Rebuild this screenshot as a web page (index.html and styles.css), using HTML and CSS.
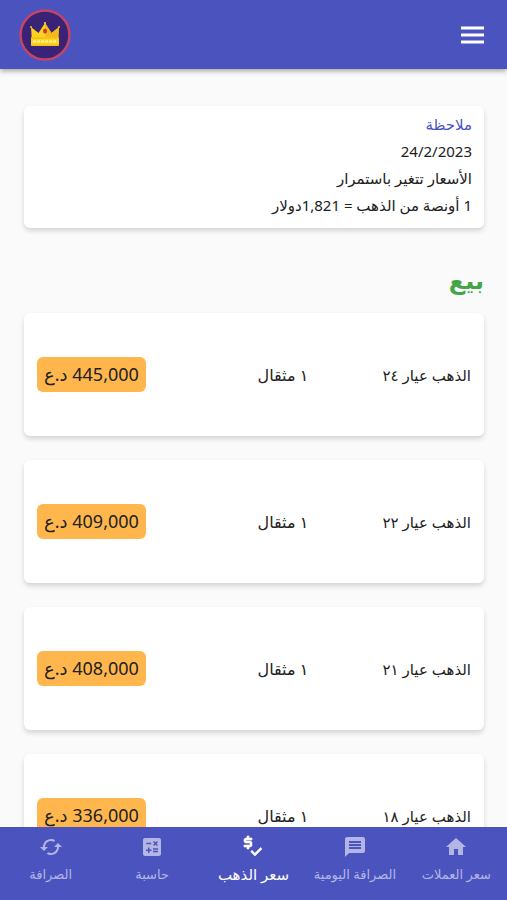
FILE: index.html
```html
<!DOCTYPE html>
<html lang="ar" dir="rtl">
<head>
    <meta charset="UTF-8">
    <meta name="viewport" content="width=device-width, initial-scale=1.0">
    <title>سعر الذهب</title>
    <link rel="stylesheet" href="styles.css">
</head>
<body>
    <header class="topbar">
        <button class="menu-btn" type="button" aria-label="القائمة">
            <svg viewBox="0 0 30 30"><path d="M3 6.500h23v3H3zM3 13.500h23v3H3zM3 20.500h23v3H3z"/></svg>
        </button>
        <a class="logo" href="#" aria-label="الرئيسية">
            <svg viewBox="0 0 52 52">
                <circle cx="26" cy="26" r="24.500" fill="#3a2376" stroke="#c24566" stroke-width="2.500"/>
                <path d="M13 33 L12 18 L19.500 24 L26 14 L32.500 24 L40 18 L39 33 Z" fill="#fcd21c"/>
                <path d="M26 14 L32.500 24 L40 18 L39 33 L26 33 Z" fill="#f5b81e"/>
                <rect x="12" y="28" width="28" height="9" rx="1" fill="#fbd51f"/>
                <path d="M12 29h28M12 36h28" stroke="#f0b41b" stroke-width="1"/>
                <path d="M14 32.500h24" stroke="#fff09a" stroke-width="2" stroke-dasharray="3 1"/>
                <circle cx="12" cy="18" r="1" fill="#f5c31e"/>
                <circle cx="26" cy="14" r="1" fill="#ffe03a"/>
                <circle cx="40" cy="18" r="1" fill="#f5c31e"/>
                <ellipse cx="26" cy="22" rx="2" ry="2.500" fill="#d23b2a"/>
            </svg>
        </a>
    </header>

    <main class="content">
        <section class="card note">
            <h2 class="note-title">ملاحظة</h2>
            <p>24/2/2023</p>
            <p>الأسعار تتغير باستمرار</p>
            <p>1 أونصة من الذهب = 1,821دولار</p>
        </section>

        <h1 class="section-title">بيع</h1>

        <div class="prices">
            <div class="card price-row">
                <span class="karat">الذهب عيار ٢٤</span>
                <span class="unit">١ مثقال</span>
                <span class="price">445,000 د.ع</span>
            </div>
            <div class="card price-row">
                <span class="karat">الذهب عيار ٢٢</span>
                <span class="unit">١ مثقال</span>
                <span class="price">409,000 د.ع</span>
            </div>
            <div class="card price-row">
                <span class="karat">الذهب عيار ٢١</span>
                <span class="unit">١ مثقال</span>
                <span class="price">408,000 د.ع</span>
            </div>
            <div class="card price-row">
                <span class="karat">الذهب عيار ١٨</span>
                <span class="unit">١ مثقال</span>
                <span class="price">336,000 د.ع</span>
            </div>
        </div>
    </main>

    <nav class="bottom-nav">
        <a class="nav-item" href="#">
            <svg viewBox="0 0 24 24"><path d="M10 20v-6h4v6h5v-8h3L12 3 2 12h3v8z"/></svg>
            <span>سعر العملات</span>
        </a>
        <a class="nav-item" href="#">
            <svg viewBox="0 0 24 24"><path d="M20 2H4c-1.100 0-2 .9-2 2v18l4-4h14c1.100 0 2-.9 2-2V4c0-1.100-.9-2-2-2zm-2 12H6v-2h12v2zm0-3H6V9h12v2zm0-3H6V6h12v2z"/></svg>
            <span>الصرافة اليومية</span>
        </a>
        <a class="nav-item active" href="#">
            <svg viewBox="0 0 24 24" stroke="currentColor" stroke-width="0.600"><path d="M11 8c0-1.100-.9-2-2-2H5V5h6V3H8V1H6v2H5c-1.100 0-2 .9-2 2v1c0 1.100.9 2 2 2h4v2H3v2h3v2h2v-2h1c1.100 0 2-.9 2-2V8zM19.590 12.520l-5.660 5.650-2.830-2.830-1.410 1.420L13.930 21 21 13.930z"/></svg>
            <span>سعر الذهب</span>
        </a>
        <a class="nav-item" href="#">
            <svg viewBox="0 0 24 24"><path d="M19 3H5c-1.100 0-2 .9-2 2v14c0 1.100.9 2 2 2h14c1.100 0 2-.9 2-2V5c0-1.100-.9-2-2-2zm-5.970 4.060L14.090 6l1.410 1.410L16.910 6l1.060 1.060-1.410 1.410 1.410 1.410-1.060 1.060-1.410-1.400-1.410 1.410-1.060-1.060 1.410-1.410-1.410-1.420zm-6.780.66h5v1.500h-5v-1.500zM11.500 16h-2v2H8v-2H6v-1.500h2v-2h1.500v2h2V16zm6.500 1.250h-5v-1.500h5v1.500zm0-2.500h-5v-1.500h5v1.500z"/></svg>
            <span>حاسبة</span>
        </a>
        <a class="nav-item" href="#">
            <svg viewBox="0 0 24 24"><path d="M19 8l-4 4h3c0 3.310-2.690 6-6 6-1.010 0-1.970-.25-2.800-.7l-1.460 1.460C8.970 19.540 10.430 20 12 20c4.420 0 8-3.580 8-8h3l-4-4zM6 12c0-3.310 2.690-6 6-6 1.010 0 1.970.25 2.800.7l1.460-1.460C15.030 4.460 13.570 4 12 4c-4.420 0-8 3.580-8 8H1l4 4 4-4H6z"/></svg>
            <span>الصرافة</span>
        </a>
    </nav>
</body>
</html>
```
FILE: styles.css
```css
:root {
    --primary: #4b53bf;
    --bg: #fafafa;
    --badge: #ffb74d;
    --green: #43a547;
    --text: #212121;
}

* {
    box-sizing: border-box;
}

body {
    display: flex;
    flex-direction: column;
    height: 100vh;
    margin: 0;
    background: var(--bg);
    color: var(--text);
    font-family: 'Noto Sans', 'DejaVu Sans', sans-serif;
}

.topbar {
    display: flex;
    justify-content: space-between;
    align-items: center;
    height: 69px;
    flex-shrink: 0;
    padding: 0 19px;
    background: var(--primary);
    box-shadow: 0 2px 5px rgba(0, 0, 0, 0.35);
    z-index: 1;
}

.menu-btn {
    padding: 0;
    border: none;
    background: none;
    cursor: pointer;
}

.menu-btn svg {
    display: block;
    width: 30px;
    height: 30px;
    fill: white;
}

.logo svg {
    display: block;
    width: 52px;
    height: 52px;
}

.content {
    flex: 1;
    min-height: 0;
    overflow-y: auto;
    scrollbar-width: none;
    padding: 37px 23px 24px 24px;
}

.card {
    background: white;
    border-radius: 6px;
    box-shadow: 0 3px 5px rgba(0, 0, 0, 0.15);
}

.note {
    padding: 5px 12px 9px;
    font-size: 15px;
    line-height: 27px;
}

.note p {
    margin: 0;
}

.note-title {
    margin: 0;
    font-size: 15px;
    font-weight: 400;
    color: var(--primary);
}

.section-title {
    margin: 32px 0 13px;
    font-size: 24px;
    line-height: 40px;
    color: var(--green);
}

.prices {
    display: flex;
    flex-direction: column;
    gap: 24px;
}

.price-row {
    display: grid;
    grid-template-columns: 3fr 2fr 3fr;
    align-items: center;
    min-height: 123px;
    padding: 0 13px;
    font-size: 15px;
}

.unit {
    font-size: 16px;
}

.price {
    justify-self: end;
    padding: 0 7px;
    border-radius: 6px;
    background: var(--badge);
    font-size: 18px;
    line-height: 35px;
    white-space: nowrap;
}

.bottom-nav {
    display: flex;
    flex-shrink: 0;
    height: 73px;
    background: var(--primary);
}

.nav-item {
    display: flex;
    flex: 1 1 0;
    flex-direction: column;
    align-items: center;
    gap: 3px;
    min-width: 0;
    padding-top: 8px;
    color: #b3b6e4;
    font-size: 13px;
    line-height: 24px;
    text-decoration: none;
    white-space: nowrap;
}

.nav-item svg {
    width: 24px;
    height: 24px;
    fill: currentColor;
}

.nav-item.active {
    color: white;
    font-size: 15px;
}
```
